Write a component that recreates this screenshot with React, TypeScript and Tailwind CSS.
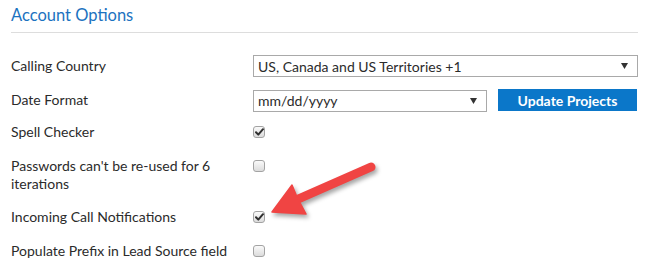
import type { ReactNode } from 'react';

const font = { fontFamily: '"Lato", "Liberation Sans", sans-serif' };

function Checkbox({ checked }: { checked?: boolean }) {
  return (
    <span className="relative inline-flex h-[12px] w-[12px] items-center justify-center rounded-[3px] border border-[#a3a3a3] bg-gradient-to-b from-[#fafafa] to-[#dcdcdc]">
      {checked && (
        <svg width="9" height="8" viewBox="0 0 9 8" className="absolute left-[1px] top-[1px]">
          <path d="M1 4.2 L3.3 6.6 L8 1.2" fill="none" stroke="#2f2f2f" strokeWidth="2" strokeLinecap="round" strokeLinejoin="round" />
        </svg>
      )}
    </span>
  );
}

function Select({ value, className }: { value: string; className: string }) {
  return (
    <div className={`flex h-[22px] items-center justify-between border border-[#a9a9a9] bg-white pl-[4px] pr-[9px] text-[14px] text-[#2b2b2b] ${className}`}>
      <span>{value}</span>
      <svg width="7" height="6" viewBox="0 0 7 6">
        <path d="M0 0 H7 L3.5 6 Z" fill="#333" />
      </svg>
    </div>
  );
}

function Row({ label, children, className = '' }: { label: ReactNode; children: ReactNode; className?: string }) {
  return (
    <div className={`flex ${className}`}>
      <div className="w-[242px] pr-[20px] text-[14px] leading-[18px] text-[#2b2b2b]">{label}</div>
      <div className="flex flex-1 items-center">{children}</div>
    </div>
  );
}

export default function App() {
  return (
    <div className="relative h-[267px] w-[651px] bg-white" style={font}>
      <div className="ml-[11px] w-[627px]">
        <div className="h-[33px] border-b border-[#dddddd] pt-[4px]">
          <h2 className="text-[16.5px] leading-[22px] text-[#1b72c0]">Account Options</h2>
        </div>

        <Row label="Calling Country" className="mt-[22px] h-[22px] items-center">
          <Select value="US, Canada and US Territories +1" className="w-[385px]" />
        </Row>

        <Row label="Date Format" className="mt-[12px] h-[22px] items-center">
          <Select value="mm/dd/yyyy" className="mt-[1px] w-[234px]" />
          <button className="ml-[11px] h-[22px] w-[139px] bg-[#0b77c9] text-[14px] font-bold text-white">
            Update Projects
          </button>
        </Row>

        <Row label="Spell Checker" className="mt-[12px] h-[18px] items-center">
          <Checkbox checked />
        </Row>

        <div className="mt-[16px] flex">
          <div className="w-[242px] pr-[20px] text-[14px] leading-[18px] text-[#2b2b2b]">
            Passwords can't be re-used for 6 iterations
          </div>
          <div className="flex h-[18px] items-center">
            <Checkbox />
          </div>
        </div>

        <Row label="Incoming Call Notifications" className="mt-[15px] h-[18px] items-center">
          <Checkbox checked />
        </Row>

        <Row label="Populate Prefix in Lead Source field" className="mt-[16px] h-[18px] items-center">
          <Checkbox />
        </Row>
      </div>

      <svg
        className="pointer-events-none absolute left-0 top-0"
        width="651"
        height="267"
        style={{ filter: 'drop-shadow(2px 3px 2px rgba(0,0,0,0.35))' }}
      >
        <line x1="371" y1="167" x2="296" y2="200" stroke="#f04443" strokeWidth="9" strokeLinecap="round" />
        <path d="M272 212 L292 185 L297 197 L306 214 Z" fill="#f04443" stroke="#f04443" strokeWidth="1.5" strokeLinejoin="round" />
      </svg>
    </div>
  );
}
